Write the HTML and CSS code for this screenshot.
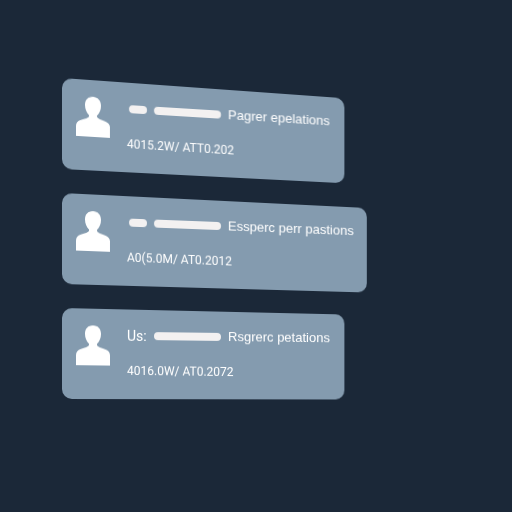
FILE: index.html
```html
<!DOCTYPE html>
<html lang="en">
<head>
  <meta charset="UTF-8" />
  <meta name="viewport" content="width=device-width,initial-scale=1" />
  <title>Users</title>
  <link rel="stylesheet" href="styles.css">
</head>
<body>

  <svg class="sprite" aria-hidden="true">
    <symbol id="user" viewBox="0 0 34 40">
      <path d="M17 0C22 0 25 3.500 25 8.500C25 12.500 23.500 16 21 18.500V20C22 21.500 25 22.500 29 23.800C32.500 25 34 27 34 30V40H0V30C0 27 1.500 25 5 23.800C9 22.500 12 21.500 13 20V18.500C10.500 16 9 12.500 9 8.500C9 3.500 12 0 17 0Z"/>
    </symbol>
  </svg>

  <main>
    <ul class="users">
      <li class="card tilt-lg">
        <svg class="avatar" aria-hidden="true"><use href="#user"/></svg>
        <div class="info">
          <div class="title">
            <span class="label"><span class="bar short"></span></span>
            <span class="bar"></span>
            <span class="name">Pagrer epelations</span>
          </div>
          <p class="meta">4015.2W/ ATT0.202</p>
        </div>
      </li>
      <li class="card tilt-md">
        <svg class="avatar" aria-hidden="true"><use href="#user"/></svg>
        <div class="info">
          <div class="title">
            <span class="label"><span class="bar short"></span></span>
            <span class="bar"></span>
            <span class="name">Essperc perr pastions</span>
          </div>
          <p class="meta">A0(5.0M/ AT0.2012</p>
        </div>
      </li>
      <li class="card tilt-sm">
        <svg class="avatar" aria-hidden="true"><use href="#user"/></svg>
        <div class="info">
          <div class="title">
            <span class="label">Us:</span>
            <span class="bar"></span>
            <span class="name">Rsgrerc petations</span>
          </div>
          <p class="meta">4016.0W/ AT0.2072</p>
        </div>
      </li>
    </ul>
  </main>

</body>
</html>
```

FILE: styles.css
```css
:root {
  --bg: #1b2838;
  --card: #849baf;
  --bar: #f3f1f1;
  --white: #ffffff;
}
* { box-sizing: border-box; margin:0; padding:0; }
body {
  font-family: Roboto, Arial, sans-serif;
  background: var(--bg);
  color: var(--white);
  min-height: 100vh;
}
.sprite { display:none; }

.users {
  list-style:none;
  display:flex; flex-direction:column; align-items:flex-start;
  gap:24px;
  padding:78px 62px;
}

/* Cards lean down to the right, each one less than the one above */
.card {
  position:relative;
  display:flex; gap:17px;
  padding:17px 14px 19px 14px;
  transform-origin: left center;
}
.card::before {
  content:'';
  position:absolute; inset:0 -8% 0 0; z-index:-1;
  background: var(--card);
  border-radius:10px;
  transform: perspective(450px) rotateY(6deg);
  transform-origin: left center;
}
.tilt-lg { transform: skewY(3.5deg); }
.tilt-md { transform: skewY(2.2deg); }
.tilt-sm { transform: skewY(.7deg); }

.avatar { width:34px; height:40px; fill: var(--white); }
.info { display:flex; flex-direction:column; gap:15px; }
.title {
  display:flex; align-items:center; gap:7px;
  font-size:14px; line-height:20px;
  white-space:nowrap;
}
.label { width:20px; }
.name { font-family:'Liberation Sans', Arial, sans-serif; font-size:13px; }
.bar {
  width:67px; height:8px;
  border-radius:4px;
  background: var(--bar);
}
.bar.short { display:block; width:18px; margin-left:2px; }
.meta { font-size:12px; line-height:20px; white-space:nowrap; }
```
